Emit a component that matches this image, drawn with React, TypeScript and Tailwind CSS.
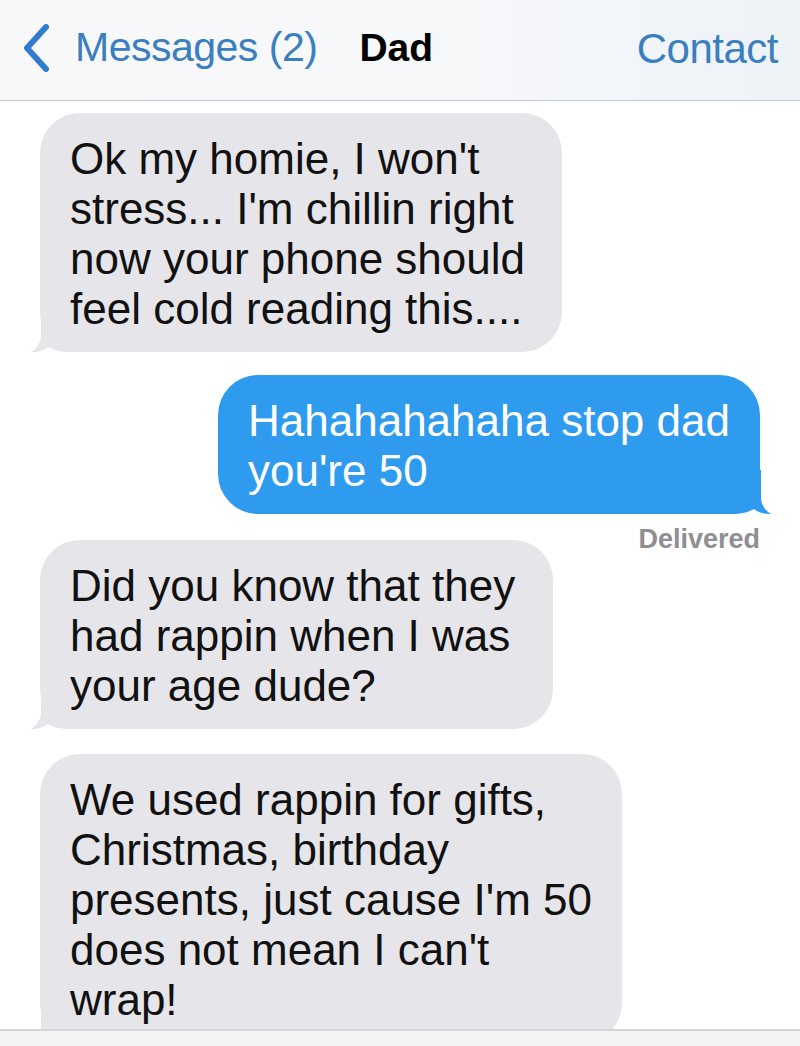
import React from 'react'

type Msg = { from: 'them' | 'me'; lines: string[]; width: string }

const MESSAGES: Msg[] = [
  {
    from: 'them',
    width: 'w-[522px]',
    lines: ["Ok my homie, I won't", "stress... I'm chillin right", 'now your phone should', 'feel cold reading this....'],
  },
  { from: 'me', width: 'w-[542px]', lines: ['Hahahahahaha stop dad', "you're 50"] },
  {
    from: 'them',
    width: 'w-[513px]',
    lines: ['Did you know that they', 'had rappin when I was', 'your age dude?'],
  },
  {
    from: 'them',
    width: 'w-[582px]',
    lines: ['We used rappin for gifts,', 'Christmas, birthday', "presents, just cause I'm 50", "does not mean I can't", 'wrap!'],
  },
]

// iOS 7 style bubble tail, drawn over the square bottom corner
function Tail({ side, color }: { side: 'left' | 'right'; color: string }) {
  const pos = side === 'left' ? 'left-[-9px]' : 'right-[-11px] -scale-x-100'
  return (
    <svg className={`absolute bottom-0 ${pos}`} width="60" height="44" viewBox="0 0 60 44">
      <path d="M10 0 L10 27 C10 35 6 40 0 44 C8 44 13 42 17 39 C22 42 30 44 40 44 L60 44 L60 0 Z" fill={color} />
    </svg>
  )
}

function Bubble({ msg }: { msg: Msg }) {
  const mine = msg.from === 'me'
  const color = mine ? '#2e9bef' : '#e5e5ea'
  return (
    <div
      className={`relative ${msg.width} rounded-[40px] pl-[30px] pr-4 pt-[21px] pb-[18px] text-[44px] leading-[50px] ${
        mine ? 'self-end bg-[#2e9bef] text-white' : 'self-start bg-[#e5e5ea] text-[#111]'
      }`}
    >
      <Tail side={mine ? 'right' : 'left'} color={color} />
      <div className="relative">
        {msg.lines.map((l, i) => (
          <div key={i} className="whitespace-nowrap">
            {l}
          </div>
        ))}
      </div>
    </div>
  )
}

export default function App() {
  return (
    <div className="flex h-[1046px] w-[800px] flex-col overflow-hidden bg-white font-['Liberation_Sans',Arial,sans-serif]">
      <header className="flex h-[101px] shrink-0 items-center border-b border-[#c8c8cc] bg-gradient-to-r from-[#f8f8f9] via-[#f7f8fa] to-[#eef3f8] pb-1 pl-[22px] pr-[22px]">
        <svg width="28" height="48" viewBox="0 0 28 48" className="mr-[25px]">
          <path d="M24 3 L5 24 L24 45" fill="none" stroke="#2f7dcc" strokeWidth="6" strokeLinecap="round" strokeLinejoin="round" />
        </svg>
        <span className="text-[41px] tracking-[-0.5px] text-[#3a7fbf]">Messages (2)</span>
        <span className="ml-[42px] text-[39px] font-bold text-black">Dad</span>
        <span className="ml-auto text-[42px] tracking-[-0.5px] text-[#3a7fbf]">Contact</span>
      </header>

      <main className="flex flex-1 flex-col overflow-hidden pl-[40px] pr-[40px] pt-3">
        <Bubble msg={MESSAGES[0]} />
        <div className="relative mt-[23px] flex flex-col">
          <Bubble msg={MESSAGES[1]} />
          <div className="absolute right-0 top-full mt-[12px] text-[27px] font-bold leading-none text-[#8e8e93]">
            Delivered
          </div>
        </div>
        <div className="mt-[26px] flex flex-col">
          <Bubble msg={MESSAGES[2]} />
        </div>
        <div className="mt-[25px] flex flex-col">
          <Bubble msg={MESSAGES[3]} />
        </div>
      </main>

      <footer className="h-[17px] shrink-0 border-t-2 border-[#d4d4d8] bg-[#f4f4f6]" />
    </div>
  )
}
